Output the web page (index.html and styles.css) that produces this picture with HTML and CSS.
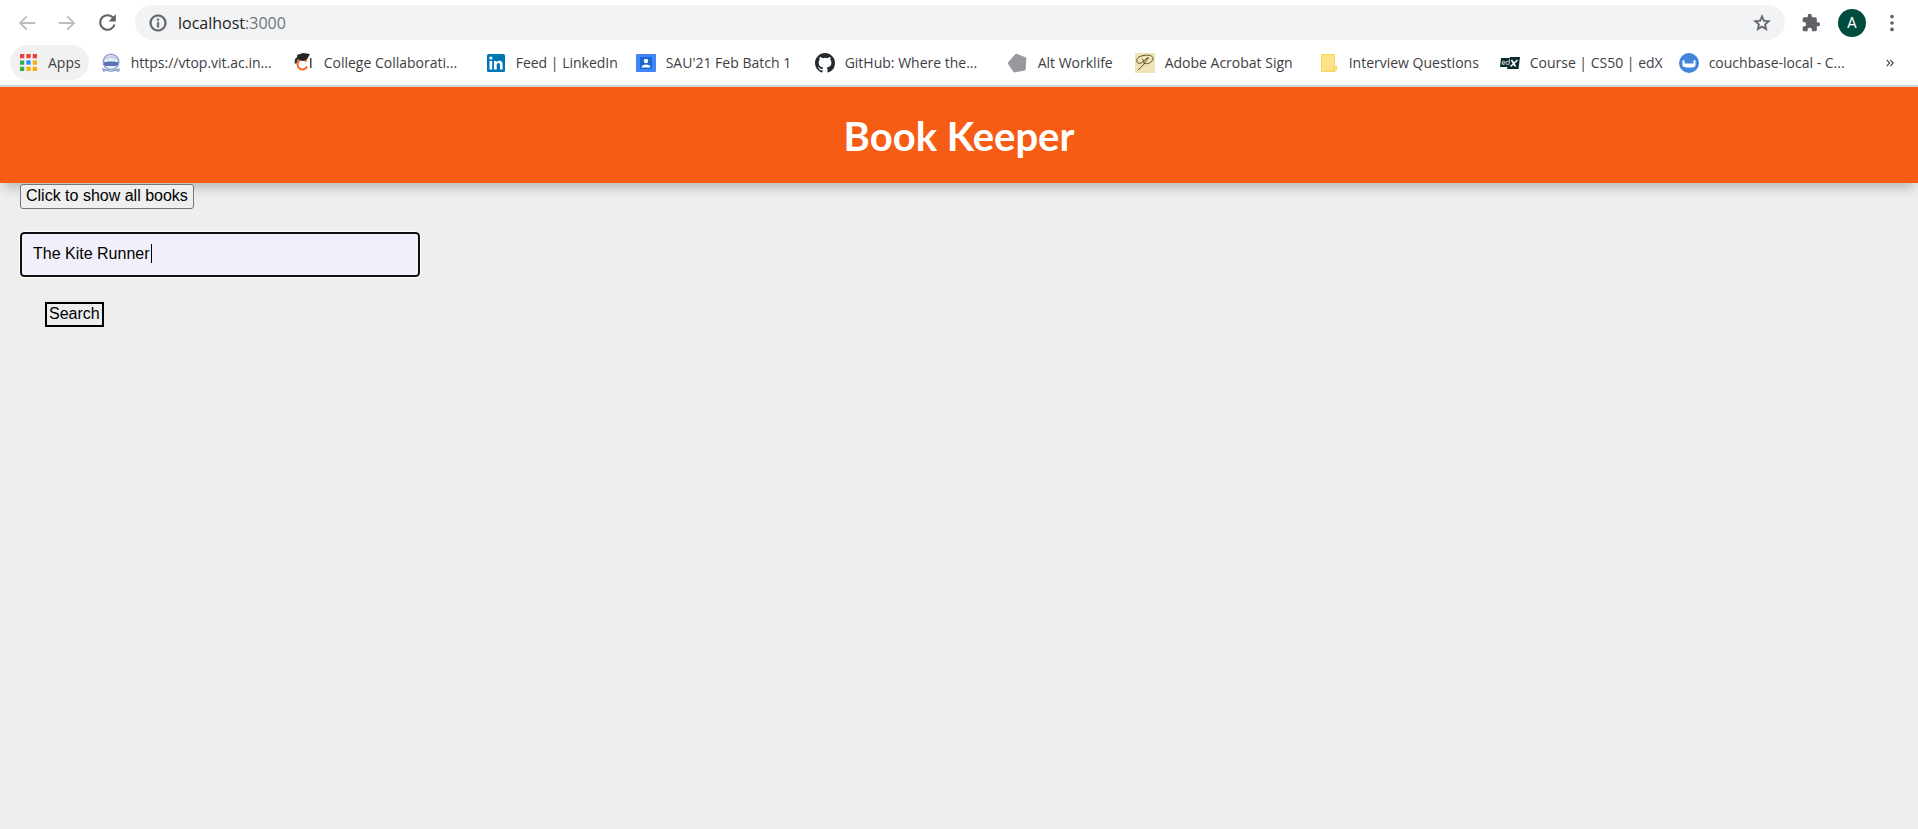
FILE: index.html
```html
<!DOCTYPE html>
<html lang="en">
<head>
<meta charset="utf-8">
<title>Book Keeper</title>
<link rel="stylesheet" href="styles.css">
</head>
<body>
<div class="browser">
  <div class="toolbar">
    <button class="tool" aria-label="Back"><svg viewBox="0 0 24 24" class="faint"><path d="M21 11H6.830l5.590-5.590L11 4l-8 8 8 8 1.410-1.410L6.830 13H21v-2z"/></svg></button>
    <button class="tool" aria-label="Forward"><svg viewBox="0 0 24 24" class="faint"><path d="M3 13h14.170l-5.590 5.590L13 20l8-8-8-8-1.410 1.410L17.170 11H3v2z"/></svg></button>
    <button class="tool reload" aria-label="Reload"><svg viewBox="0 0 24 24"><path d="M17.65 6.35A7.96 7.96 0 0 0 12 4a8 8 0 1 0 7.73 10h-2.08A6 6 0 1 1 12 6c1.66 0 3.14.69 4.22 1.78L13 11h7V4l-2.35 2.35z"/></svg></button>
    <div class="address">
      <button class="site" aria-label="Site information"><svg viewBox="0 0 24 24"><path stroke="#5f6368" stroke-width=".6" d="M11 17h2v-6h-2v6zm1-15a10 10 0 1 0 0 20 10 10 0 0 0 0-20zm0 18a8 8 0 1 1 0-16 8 8 0 0 1 0 16zM11 9h2V7h-2v2z"/></svg></button>
      <span class="url">localhost<span class="port">:3000</span></span>
      <button class="site" aria-label="Bookmark this tab"><svg viewBox="0 0 24 24"><path stroke="#5f6368" stroke-width=".6" d="M22 9.24l-7.19-.62L12 2 9.19 8.63 2 9.24l5.46 4.73L5.82 21 12 17.27 18.18 21l-1.63-7.03L22 9.24zM12 15.4l-3.76 2.27 1-4.28-3.32-2.88 4.38-.38L12 6.1l1.71 4.04 4.38.38-3.32 2.88 1 4.28L12 15.4z"/></svg></button>
    </div>
    <button class="tool extensions" aria-label="Extensions"><svg viewBox="0 0 24 24"><path d="M20.5 11H19V7a2 2 0 0 0-2-2h-4V3.500a2.500 2.500 0 0 0-5 0V5H4a2 2 0 0 0-2 2v3.800h1.500a2.700 2.700 0 0 1 0 5.400H2V20a2 2 0 0 0 2 2h3.800v-1.500a2.700 2.700 0 0 1 5.400 0V22H17a2 2 0 0 0 2-2v-4h1.500a2.500 2.500 0 0 0 0-5z"/></svg></button>
    <button class="avatar">A</button>
    <button class="tool" aria-label="Menu"><svg viewBox="0 0 24 24"><circle cx="12" cy="5" r="2"/><circle cx="12" cy="12" r="2"/><circle cx="12" cy="19" r="2"/></svg></button>
  </div>
  <nav class="bookmarks" aria-label="Bookmarks">
    <a class="apps" href="#"><svg viewBox="0 0 16 16"><path fill="#ea4335" d="M0 0h4v4H0zM6 0h4v4H6zM12 0h4v4h-4z"/><path fill="#34a853" d="M0 6h4v4H0zM0 12h4v4H0z"/><path fill="#1a8cff" d="M6 6h4v4H6z"/><path fill="#fbae05" d="M12 6h4v4h-4zM6 12h4v4H6zM12 12h4v4h-4z"/></svg>Apps</a>
    <div class="links">
      <a href="#"><svg viewBox="0 0 20 20"><circle cx="10" cy="9" r="7.800" fill="#e8ecf6" stroke="#8fa0cc" stroke-width="1.500"/><path d="M5 6q5-4 10 0" fill="none" stroke="#b9c4e1" stroke-width="1.500"/><path d="M3 9h3l1-1 1 1 2-1 1 1 2-1 1 1h3v3l-2 1H4l-1-1z" fill="#5b74b5"/><path d="M1 15l3 1 6 2 6-2 3-1-1 4-3-1-5 1-5-1-3 1z" fill="#8fa0cc"/></svg><span>https://vtop.vit.ac.in...</span></a>
      <a href="#"><svg viewBox="0 0 20 20"><path d="M12.500 8.500A5 5 0 1 0 13 13.500" fill="none" stroke="#f26a21" stroke-width="2"/><path d="M3 2l6-2 7 1-3 5.500-4 1.500-5-1.500z" fill="#242424"/><path d="M5 2L1 6 .5 10.500h2L4 6" fill="#333"/><path d="M16 5h1.500v10H16z" fill="#444"/></svg><span>College Collaborati...</span></a>
      <a href="#"><svg viewBox="0 0 20 20"><rect x="1" y="1" width="18" height="18" rx="1.500" fill="#0077b5"/><path d="M3.500 8h2.700v8.500H3.500zM8 8h2.500v1.200c.5-.9 1.500-1.500 2.900-1.500 2.500 0 3.200 1.600 3.200 4v4.800H14v-4.300c0-1.100-.1-2.300-1.500-2.300s-1.800 1-1.800 2.200v4.400H8z" fill="#fff"/><circle cx="4.850" cy="5" r="1.600" fill="#fff"/></svg><span>Feed | LinkedIn</span></a>
      <a href="#"><svg viewBox="0 0 20 20"><rect y="1" width="20" height="18" rx="1" fill="#4285f4"/><rect x="4" y="4" width="12" height="12" fill="#1a67d2"/><circle cx="10" cy="8" r="2.200" fill="#fff"/><path d="M5.500 14.500c0-4 9-4 9 0z" fill="#fff"/></svg><span>SAU'21 Feb Batch 1</span></a>
      <a href="#"><svg viewBox="0 0 16 16"><path fill="#24292e" d="M8 0C3.580 0 0 3.580 0 8c0 3.540 2.290 6.530 5.470 7.590.4.070.55-.17.55-.38 0-.19-.01-.82-.01-1.490-2.010.37-2.530-.49-2.690-.94-.09-.23-.48-.94-.82-1.130-.28-.15-.68-.52-.01-.53.63-.01 1.080.58 1.230.82.72 1.210 1.870.87 2.330.66.070-.52.280-.87.510-1.070-1.780-.2-3.640-.89-3.640-3.950 0-.87.310-1.590.82-2.150-.08-.2-.36-1.020.08-2.120 0 0 .67-.21 2.200.82a7.600 7.600 0 0 1 4 0c1.530-1.040 2.200-.82 2.200-.82.44 1.100.16 1.920.08 2.120.51.560.82 1.270.82 2.150 0 3.070-1.870 3.750-3.650 3.950.29.25.54.73.54 1.480 0 1.070-.01 1.930-.01 2.200 0 .21.15.46.55.38A8 8 0 0 0 16 8c0-4.420-3.580-8-8-8z"/></svg><span>GitHub: Where the...</span></a>
      <a href="#"><svg viewBox="0 0 20 20"><path d="M8 1l10 4-1 12-11 2-6-9z" fill="#97999c" stroke="#97999c" stroke-linejoin="round"/></svg><span>Alt Worklife</span></a>
      <a href="#"><svg viewBox="0 0 20 20"><path fill="#eee3b4" d="M0 0h20v20H0z"/><path d="M3 17C7 14 11 9 13 4M6 10C1 12 0 5 5 3.500c5-2 13-2 13 2 0 4-7 6.500-9 4.500-2-3 4-5 5-4.500M6 10c3-1 3-4 1-3.500" fill="none" stroke="#5d5230"/></svg><span>Adobe Acrobat Sign</span></a>
      <a href="#"><svg viewBox="0 0 20 20"><path d="M2.500 1.500h13v12h2v3.500l-1.500 1.500H2.500z" fill="#fee28a" stroke="#fbd65c"/><path d="M15.500 14l-1.500 2 1.500 2" fill="none" stroke="#f7c631"/></svg><span>Interview Questions</span></a>
      <a href="#"><svg viewBox="0 0 20 20"><path d="M1 5h11l-1 9H0zM10 4h10l-1.500 12H7z" fill="#0b2b2c"/><path d="M2 10h3q0-2-1.500-2T2 10q0 2 2.500 1.500M9.500 6L9 11.500M9.500 9Q6 7 6 10t3 1" fill="none" stroke="#c3cccc"/><path d="M11.500 7l4 6.500M17.500 7l-7 6.500" stroke="#fff" stroke-width="1.600"/></svg><span>Course | CS50 | edX</span></a>
      <a href="#"><svg viewBox="0 0 20 20"><circle cx="10" cy="10" r="10" fill="#4285d9"/><path d="M3.500 7.500q1.500-1 2 .5v2.500h9V8q.5-1.500 2-.5v5q0 2-6.500 2t-6.500-2z" fill="#fff"/></svg><span>couchbase-local - C...</span></a>
    </div>
    <button class="more" aria-label="More bookmarks"><svg viewBox="0 0 10 10"><path d="M1 1l3.500 4L1 9M5.500 1L9 5 5.500 9" fill="none" stroke="#45494d" stroke-width="1.500"/></svg></button>
  </nav>
</div>
<header class="banner"><h1>Book Keeper</h1></header>
<main class="page">
  <button class="show">Click to show all books</button>
  <form class="search">
    <div class="field"><input type="text" aria-label="Book title" value="The Kite Runner"><span class="caret"></span></div>
    <button class="go" type="button">Search</button>
  </form>
</main>
</body>
</html>
```
FILE: styles.css
```css
* { box-sizing: border-box; }
body {
  margin: 0;
  background: #eee;
  color: #000;
  font-family: "Liberation Sans", Arial, sans-serif;
}
button { border: 0; padding: 0; background: none; font: inherit; color: inherit; }
svg { display: block; flex: none; }
.browser {
  background: #fff;
  border-bottom: 2px solid #d5d7da;
  font-family: "Segoe UI", "Open Sans", sans-serif;
}
.toolbar { display: flex; align-items: center; padding: 5px 6px 5px 7px; }
.tool { width: 40px; display: flex; justify-content: center; }
.tool svg { width: 22px; height: 22px; fill: #5f6368; }
.tool .faint { fill: #babcbe; }
.reload svg { width: 25px; height: 25px; }
.extensions svg { width: 20px; height: 20px; }
.address {
  flex: 1;
  height: 35px;
  margin: 0 6px 0 8px;
  padding: 0 13px;
  display: flex;
  align-items: center;
  gap: 10px;
  border-radius: 18px;
  background: #f1f3f4;
}
.site svg { width: 20px; height: 20px; fill: #5f6368; }
.url { flex: 1; font-size: 16px; color: #202124; }
.port { color: #6f7378; }
.avatar {
  width: 28px;
  height: 28px;
  margin: 0 6px 0 7px;
  border-radius: 50%;
  background: #004d40;
  color: #fff;
  font-family: Roboto, sans-serif;
  font-size: 15px;
}
.bookmarks {
  display: flex;
  align-items: center;
  padding: 0 24px 5px 10px;
  font-size: 14px;
  color: #3c4043;
}
.bookmarks a { display: flex; align-items: center; color: inherit; text-decoration: none; white-space: nowrap; }
.apps { height: 35px; padding: 0 8px 0 10px; gap: 11px; border-radius: 18px; background: #f1f1f1; }
.apps svg { width: 17px; height: 17px; }
.links { flex: 1; margin-left: 12px; display: grid; grid-template-columns: 193px 192px 150px 179px 193px 127px 184px 181px 179px auto; }
.links a { gap: 10px; }
.links svg { width: 20px; height: 20px; }
.more svg { width: 8px; height: 8px; }
.banner {
  height: 96px;
  display: flex;
  align-items: center;
  justify-content: center;
  background: #f75c14;
  color: #fff;
  box-shadow: 0 8px 12px -4px #00000040;
}
.banner h1 { margin: 0; padding-top: 2px; font: 700 40px "Comic Sans MS", Lato, sans-serif; }
.page { padding: 1px 20px; }
.show {
  display: block;
  height: 25px;
  padding: 0 5px 2px;
  border: 1px solid #767676;
  border-radius: 3px;
  background: #efefef;
  font-size: 16px;
}
.field { position: relative; width: 400px; margin: 23px 0 25px; }
.field input {
  display: block;
  width: 100%;
  height: 45px;
  padding: 0 11px 2px;
  border: 2px solid #101010;
  border-radius: 4px;
  outline: 1px solid #fff;
  background: #f1effa;
  color: #000;
  font: 16px "Liberation Sans", Arial, sans-serif;
}
.caret { position: absolute; left: 131px; top: 12px; width: 1px; height: 19px; background: #000; }
.go { height: 25px; margin-left: 25px; padding: 0 2px 2px; border: 2px solid #000; font-size: 16px; }
```
